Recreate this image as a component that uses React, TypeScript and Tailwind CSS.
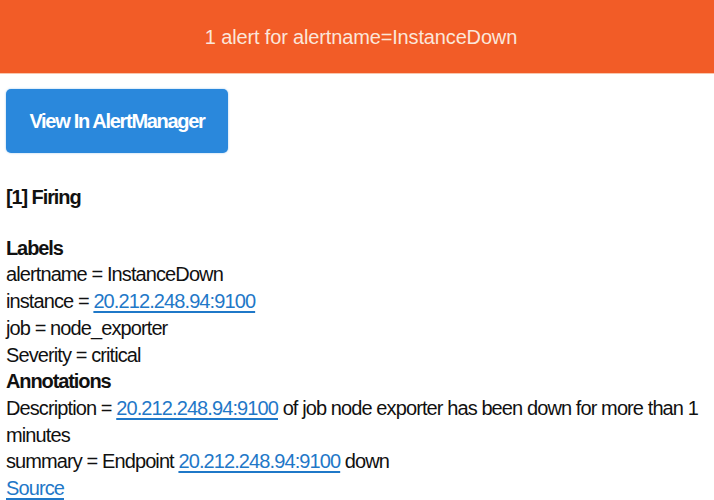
import React from "react";

const Link = ({ children }: { children: React.ReactNode }) => (
  <a href="#" className="text-[#1f78c8] underline decoration-[#1f78c8] underline-offset-[3px]">
    {children}
  </a>
);

export default function App() {
  return (
    <div
      className="min-h-[500px] w-[714px] bg-white text-[#111111]"
      style={{ fontFamily: '"Liberation Sans", Arial, sans-serif' }}
    >
      <div className="flex h-[74px] items-center justify-center border-b border-[#f9c7ad] bg-[#f25c27]">
        <span className="pl-[8px] text-[20px] tracking-[-0.15px] text-[#fbe6da]">1 alert for alertname=InstanceDown</span>
      </div>
      <div className="px-[6px]">
        <div className="mt-[15px] flex h-[64px] w-[222px] items-center justify-center rounded-[5px] bg-[#2a88dc] text-[20px] font-bold tracking-[-1.3px] text-white shadow-[0_0_2px_rgba(42,136,220,0.5)]">
          View In AlertManager
        </div>
        <div className="text-[20px] leading-[26.7px] tracking-[-0.9px]">
          <div className="mt-[31px] font-bold tracking-[-1.1px]">[1] Firing</div>
          <div className="mt-[24px] font-bold tracking-[-1.1px]">Labels</div>
          <div>alertname = InstanceDown</div>
          <div>
            instance = <Link>20.212.248.94:9100</Link>
          </div>
          <div>job = node_exporter</div>
          <div>Severity = critical</div>
          <div className="font-bold tracking-[-1.1px]">Annotations</div>
          <div>
            Description = <Link>20.212.248.94:9100</Link> of job node exporter has been down for more than 1 minutes
          </div>
          <div>
            summary = Endpoint <Link>20.212.248.94:9100</Link> down
          </div>
          <div>
            <Link>Source</Link>
          </div>
        </div>
      </div>
    </div>
  );
}
